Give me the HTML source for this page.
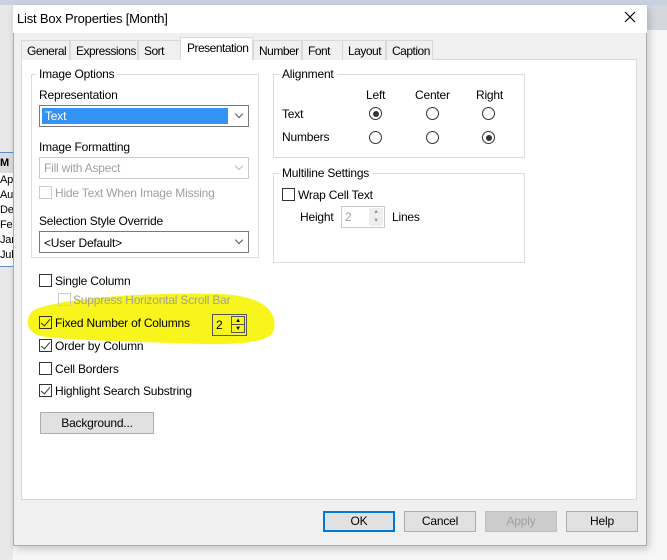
<!DOCTYPE html>
<html><head><meta charset="utf-8"><style>
*{box-sizing:border-box;margin:0;padding:0}
body{width:667px;height:560px;overflow:hidden;background:#f7f7f7;font-family:"Liberation Sans",sans-serif;font-size:12px;color:#000;position:relative;letter-spacing:-0.2px}
.a{position:absolute}
.dlg{left:13px;top:5px;width:634px;height:541px;background:#f0f0f0;border:1px solid #aaa;box-shadow:2px 3px 8px rgba(0,0,0,.2)}
.title{left:13px;top:5px;width:634px;height:28px;background:#fff}
.panel{left:21px;top:59px;width:616px;height:441px;background:#fff;border:1px solid #d9d9d9}
.tab{top:40px;height:20px;border:1px solid #d9d9d9;border-bottom:none;background:#f0f0f0;padding:3px 0 0 5px;letter-spacing:-0.5px;white-space:nowrap;overflow:hidden}
.grp{border:1px solid #dcdcdc}
.gl{background:#fff;padding:0 3px}
.cb{width:13px;height:13px;border:1px solid #333;background:#fff}
.cb.dis{border-color:#ccc}
.ck::after{content:"";position:absolute;left:3px;top:0px;width:4px;height:8px;border:solid #333;border-width:0 1.5px 1.5px 0;transform:rotate(40deg)}
.rd{width:13px;height:13px;border:1px solid #333;border-radius:50%;background:#fff}
.rd.on::after{content:"";position:absolute;left:2.5px;top:2.5px;width:6px;height:6px;border-radius:50%;background:#333}
.sel{border:1px solid #7a7a7a;background:#fff;height:22px}
.chev{width:6px;height:6px;border:solid #555;border-width:0 1px 1px 0;transform:rotate(45deg)}
.btn{top:511px;width:72px;height:21px;border:1px solid #adadad;background:#e1e1e1;text-align:center;line-height:19px}
.gray{color:#a0a0a0}
</style></head><body>
<div class="a" style="left:0;top:0;width:667px;height:5px;background:#c9d3e0"></div>
<div class="a" style="left:647px;top:5px;width:20px;height:25px;background:#d4d8de"></div>
<div class="a" style="left:0;top:5px;width:13px;height:555px;background:#e8e8e8"></div>
<div class="a" style="left:0;top:152px;width:13px;height:115px;background:#fff;border-top:1px solid #5b8fc9;border-bottom:1px solid #5b8fc9;font-size:11px;line-height:15px;overflow:hidden">
<div style="background:#ddd;font-weight:bold;height:20px;line-height:20px">M</div>Apr<br>Aug<br>Dec<br>Feb<br>Jan<br>Jul</div>
<div class="a dlg"></div>
<div class="a title"></div>
<div class="a" style="left:17px;top:11px;font-size:13px">List Box Properties [Month]</div>
<svg class="a" style="left:624px;top:11px" width="12" height="12"><path d="M1 1L11 11M11 1L1 11" stroke="#000" stroke-width="1.2"/></svg>
<div class="a panel"></div>
<div class="a tab" style="left:21px;width:49px">General</div>
<div class="a tab" style="left:70px;width:68px">Expressions</div>
<div class="a tab" style="left:138px;width:43px">Sort</div>
<div class="a tab" style="left:180px;top:37px;height:23px;width:73px;background:#fff;padding-left:6px">Presentation</div>
<div class="a tab" style="left:253px;width:49px">Number</div>
<div class="a tab" style="left:302px;width:42px">Font</div>
<div class="a tab" style="left:342px;width:44px">Layout</div>
<div class="a tab" style="left:386px;width:47px">Caption</div>

<div class="a grp" style="left:31px;top:74px;width:228px;height:184px"></div>
<div class="a gl" style="left:36px;top:67px">Image Options</div>
<div class="a" style="left:39px;top:88px">Representation</div>
<div class="a sel" style="left:39px;top:105px;width:210px"><div class="a" style="left:2px;top:2px;width:186px;height:16px;background:#3393f5;color:#fff;padding-left:3px;line-height:16px">Text</div><div class="a chev" style="left:196px;top:5px"></div></div>
<div class="a" style="left:39px;top:140px">Image Formatting</div>
<div class="a sel gray" style="left:39px;top:157px;width:210px;border-color:#ccc;background:#fff;padding:3px 4px">Fill with Aspect<div class="a chev" style="left:196px;top:5px;border-color:#bbb"></div></div>
<div class="a cb dis" style="left:39px;top:186px"></div>
<div class="a gray" style="left:55px;top:186px">Hide Text When Image Missing</div>
<div class="a" style="left:39px;top:214px">Selection Style Override</div>
<div class="a sel" style="left:39px;top:231px;width:210px;padding:4px 4px">&lt;User Default&gt;<div class="a chev" style="left:196px;top:5px"></div></div>

<div class="a grp" style="left:273px;top:74px;width:252px;height:84px"></div>
<div class="a gl" style="left:279px;top:67px">Alignment</div>
<div class="a" style="left:366px;top:88px">Left</div>
<div class="a" style="left:415px;top:88px">Center</div>
<div class="a" style="left:476px;top:88px">Right</div>
<div class="a" style="left:282px;top:107px">Text</div>
<div class="a" style="left:282px;top:130px">Numbers</div>
<div class="a rd on" style="left:369px;top:107px"></div>
<div class="a rd" style="left:426px;top:107px"></div>
<div class="a rd" style="left:482px;top:107px"></div>
<div class="a rd" style="left:369px;top:131px"></div>
<div class="a rd" style="left:426px;top:131px"></div>
<div class="a rd on" style="left:482px;top:131px"></div>

<div class="a grp" style="left:273px;top:173px;width:252px;height:90px"></div>
<div class="a gl" style="left:279px;top:166px">Multiline Settings</div>
<div class="a cb" style="left:282px;top:188px"></div>
<div class="a" style="left:298px;top:188px">Wrap Cell Text</div>
<div class="a" style="left:300px;top:210px">Height</div>
<div class="a gray" style="left:341px;top:206px;width:44px;height:22px;border:1px solid #ccc;background:#fff;padding:3px 3px">2</div>
<div class="a" style="left:369px;top:208px;width:14px;height:18px;background:#eee;font-size:6px;color:#999;text-align:center;line-height:9px">▲<br>▼</div>
<div class="a" style="left:392px;top:210px">Lines</div>

<svg class="a" style="left:0;top:0" width="300" height="360"><path d="M34 310C60 298 150 292 220 294C262 296 278 310 274 330C270 346 220 345 170 343C120 341 60 340 40 336C26 332 24 318 34 310Z" fill="#f8f51c"/></svg>
<div class="a cb" style="left:39px;top:274px"></div>
<div class="a" style="left:55px;top:274px">Single Column</div>
<div class="a cb dis" style="left:58px;top:293px;background:transparent"></div>
<div class="a gray" style="left:73px;top:293px">Suppress Horizontal Scroll Bar</div>
<div class="a cb ck" style="left:39px;top:316px;background:transparent"></div>
<div class="a" style="left:55px;top:316px">Fixed Number of Columns</div>
<div class="a" style="left:212px;top:314px;width:35px;height:22px;border:1px solid #555;padding:3px 3px">2</div>
<div class="a" style="left:231px;top:316px;width:14px;height:18px;font-size:6px;text-align:center;line-height:9px"><div style="border:1px solid #555;height:9px">▲</div><div style="border:1px solid #555;height:9px;margin-top:-1px">▼</div></div>
<div class="a cb ck" style="left:39px;top:339px"></div>
<div class="a" style="left:55px;top:339px">Order by Column</div>
<div class="a cb" style="left:39px;top:362px"></div>
<div class="a" style="left:55px;top:362px">Cell Borders</div>
<div class="a cb ck" style="left:39px;top:384px"></div>
<div class="a" style="left:55px;top:384px">Highlight Search Substring</div>
<div class="a btn" style="left:40px;top:412px;width:114px;height:22px;line-height:20px">Background...</div>

<div class="a btn" style="left:323px;border:2px solid #0078d7;line-height:17px">OK</div>
<div class="a btn" style="left:404px">Cancel</div>
<div class="a btn gray" style="left:485px;background:#ccc;border-color:#bfbfbf">Apply</div>
<div class="a btn" style="left:566px">Help</div>
</body></html>
